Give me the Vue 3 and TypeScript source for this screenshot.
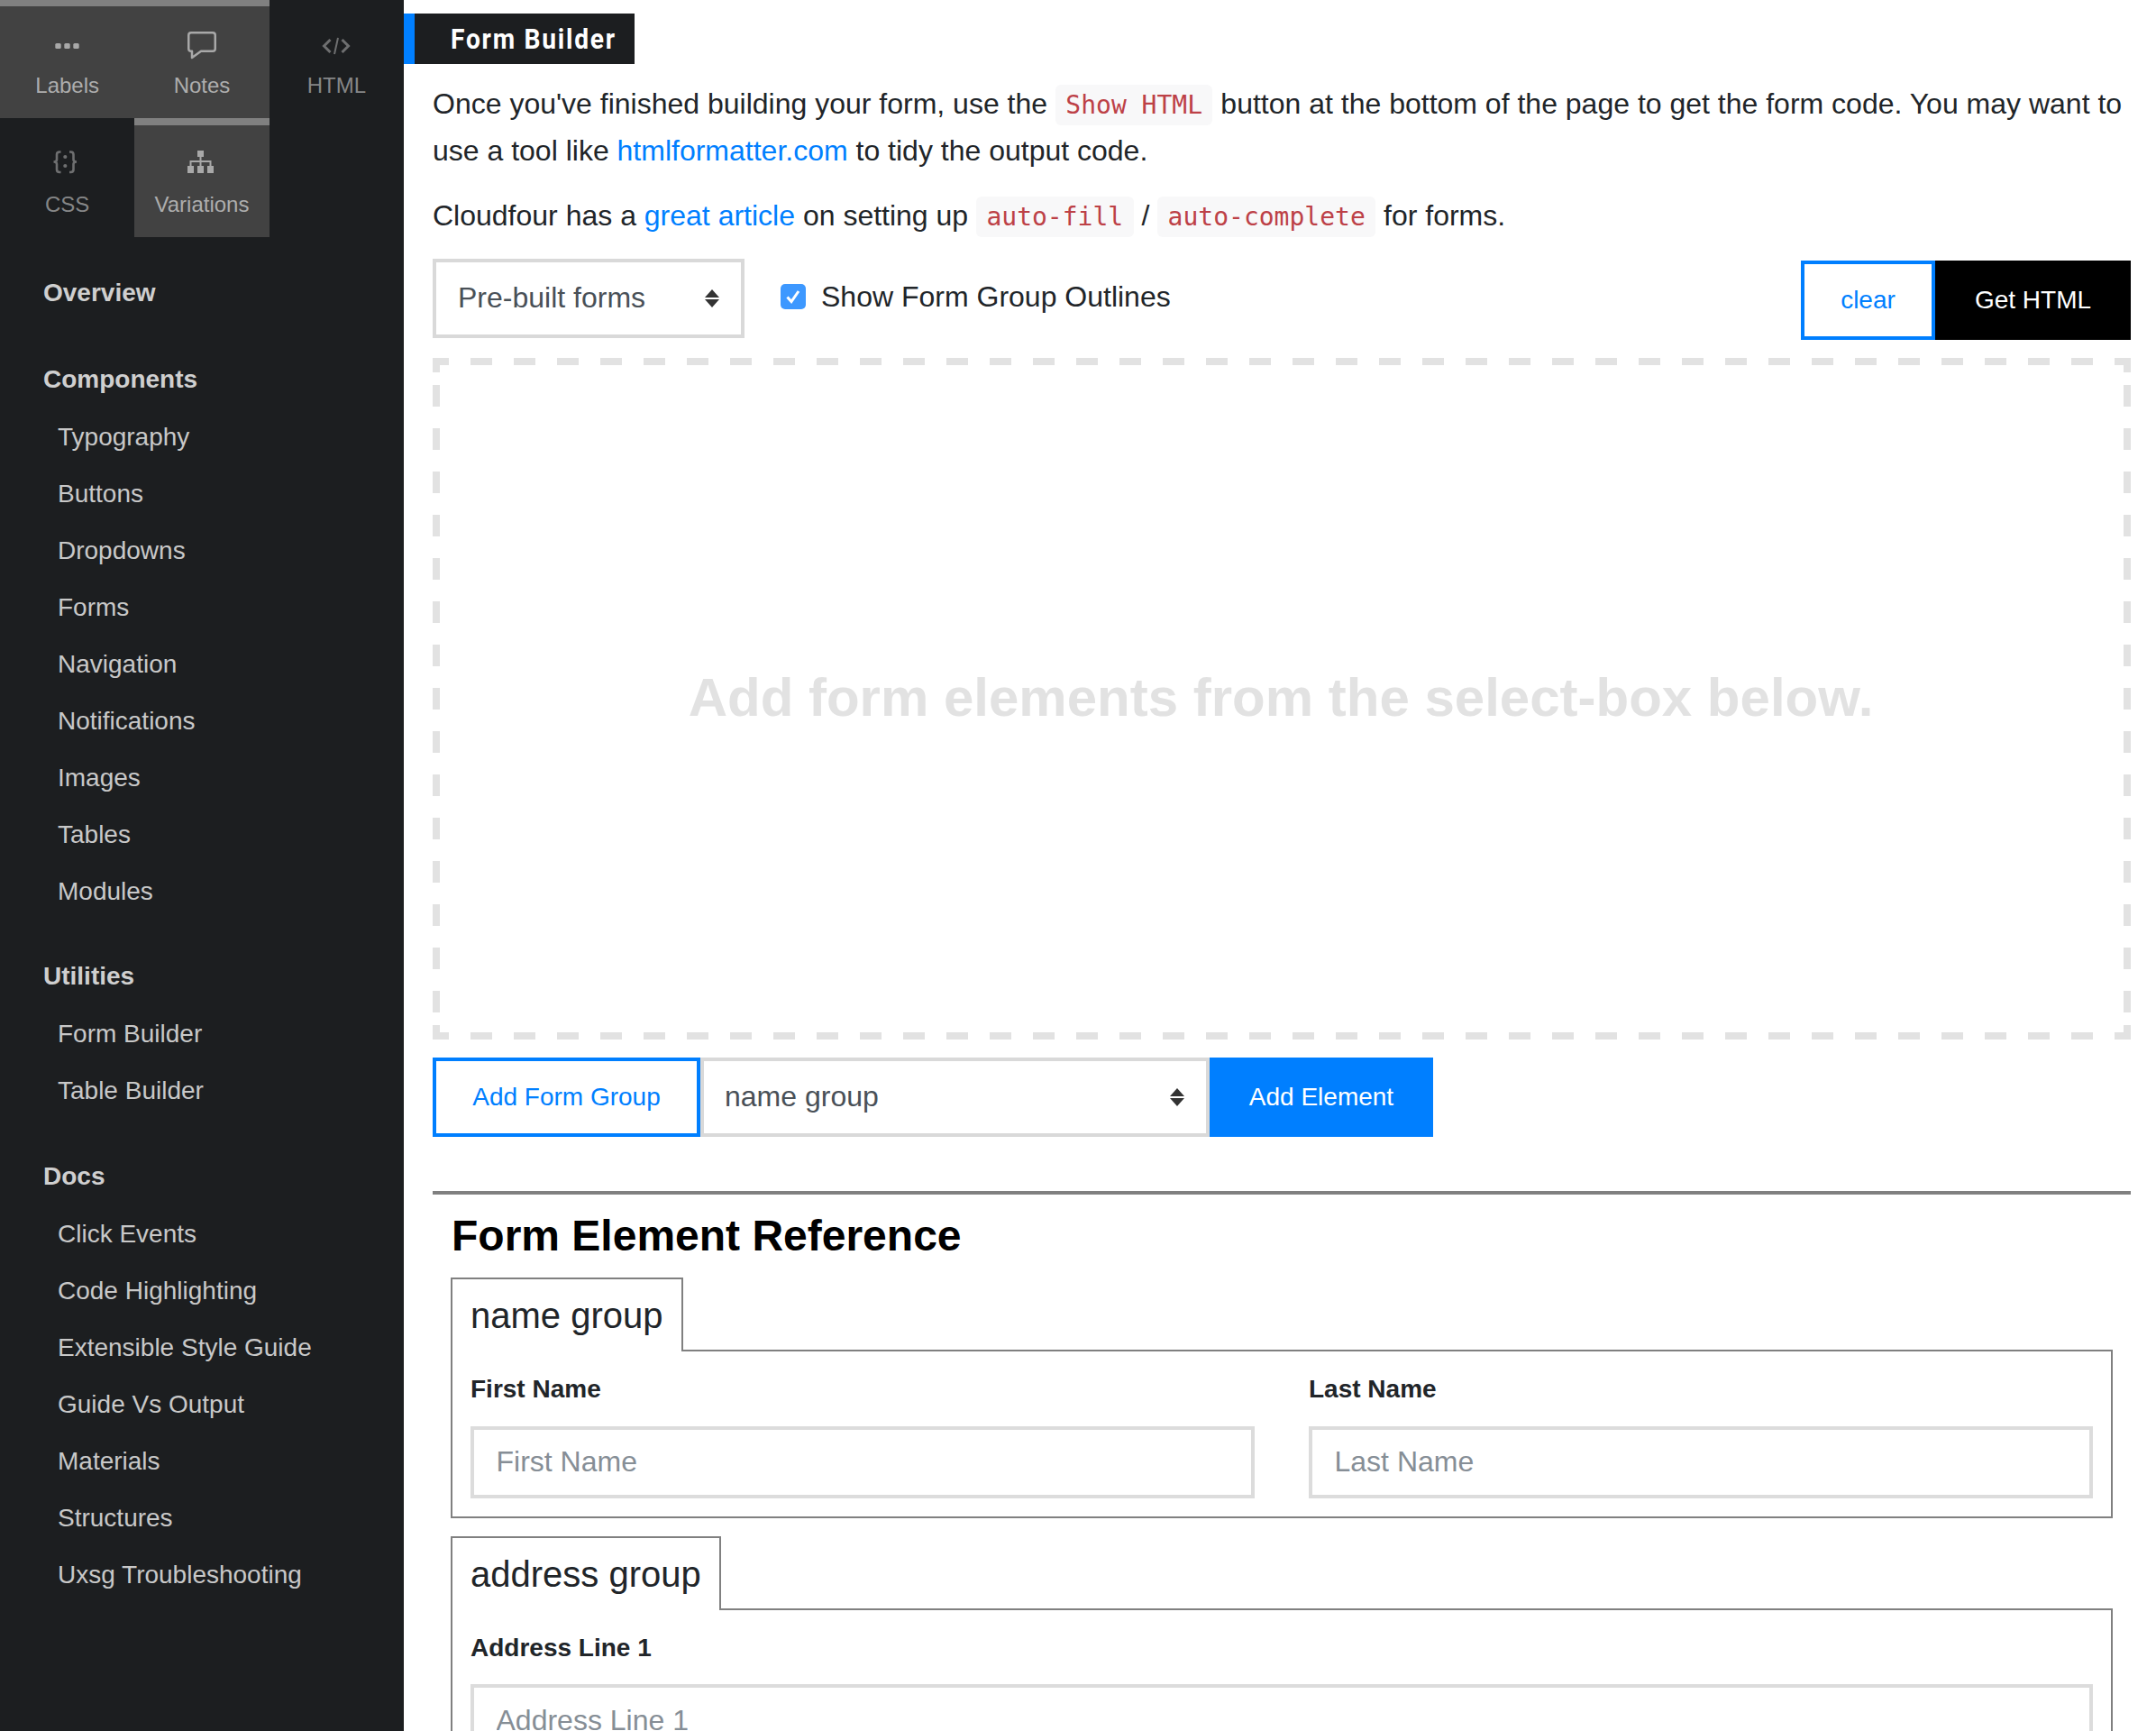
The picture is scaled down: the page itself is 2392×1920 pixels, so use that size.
<script setup lang="ts">
interface NavSection {
  title: string
  items: string[]
}

const tabs = [
  { name: 'Labels', icon: 'labels', active: true },
  { name: 'Notes', icon: 'notes', active: true },
  { name: 'HTML', icon: 'html', active: false },
  { name: 'CSS', icon: 'css', active: false },
  { name: 'Variations', icon: 'variations', active: true },
]

const nav: NavSection[] = [
  { title: 'Overview', items: [] },
  {
    title: 'Components',
    items: ['Typography', 'Buttons', 'Dropdowns', 'Forms', 'Navigation', 'Notifications', 'Images', 'Tables', 'Modules'],
  },
  { title: 'Utilities', items: ['Form Builder', 'Table Builder'] },
  {
    title: 'Docs',
    items: ['Click Events', 'Code Highlighting', 'Extensible Style Guide', 'Guide Vs Output', 'Materials', 'Structures', 'Uxsg Troubleshooting'],
  },
]
</script>

<template>
  <div class="page">
    <aside class="sidebar">
      <div class="tabs">
        <a v-for="tab in tabs" :key="tab.name" class="tab" :class="{ active: tab.active }">
          <svg class="tab-icon" width="36" height="36" viewBox="0 0 36 36">
            <g v-if="tab.icon === 'labels'" fill="currentColor">
              <rect x="4.3" y="16" width="6.4" height="6" rx="1.6" />
              <rect x="14.3" y="16" width="6.4" height="6" rx="1.6" />
              <rect x="24.3" y="16" width="6.4" height="6" rx="1.6" />
            </g>
            <path
              v-else-if="tab.icon === 'notes'"
              d="M6 4.25H30Q32.75 4.25 32.75 7V22Q32.75 24.75 30 24.75H17L7 32V24.75H6Q3.25 24.75 3.25 22V7Q3.25 4.25 6 4.25Z"
              fill="none"
              stroke="currentColor"
              stroke-width="2.5"
              stroke-linejoin="round"
            />
            <g v-else-if="tab.icon === 'html'" fill="none" stroke="currentColor" stroke-width="3">
              <path d="M11.5 12L4.5 19L11.5 26" />
              <path d="M20 10L16 28" stroke-width="2" />
              <path d="M24.5 12L31.5 19L24.5 26" />
            </g>
            <g v-else-if="tab.icon === 'css'">
              <path
                d="M10.5 4.5H9Q6 4.5 6 7.5V13Q6 15.5 2.5 15.5Q6 15.5 6 18V24Q6 27 9 27H10.5M20 4.5H21.5Q24.5 4.5 24.5 7.5V13Q24.5 15.5 28 15.5Q24.5 15.5 24.5 18V24Q24.5 27 21.5 27H20"
                fill="none"
                stroke="currentColor"
                stroke-width="2.6"
              />
              <circle cx="15.3" cy="10" r="2.1" fill="currentColor" />
              <circle cx="15.3" cy="20" r="2.1" fill="currentColor" />
            </g>
            <g v-else fill="currentColor">
              <rect x="13" y="3" width="7" height="7" />
              <rect x="2" y="20" width="7" height="8" />
              <rect x="13" y="20" width="7" height="8" />
              <rect x="24" y="20" width="7" height="8" />
              <path d="M15.5 10h2v4h11v6h-2v-4h-9v4h-2v-4h-9v4h-2v-6h11z" />
            </g>
          </svg>
          <span class="tab-label">{{ tab.name }}</span>
        </a>
      </div>

      <nav class="nav">
        <section v-for="section in nav" :key="section.title" class="nav-section">
          <a class="nav-title">{{ section.title }}</a>
          <a v-for="item in section.items" :key="item" class="nav-item">{{ item }}</a>
        </section>
      </nav>
    </aside>

    <main class="main">
      <h1 class="title"><span>Form Builder</span></h1>

      <p class="intro">
        Once you've finished building your form, use the <code>Show HTML</code> button at the bottom of the page to get the form code. You may want to use a tool like <a class="link">htmlformatter.com</a> to tidy the output code.
      </p>
      <p class="intro second">
        Cloudfour has a <a class="link">great article</a> on setting up <code>auto-fill</code> / <code>auto-complete</code> for forms.
      </p>

      <div class="toolbar">
        <div class="select prebuilt">
          <select>
            <option>Pre-built forms</option>
          </select>
          <svg class="arrows" width="16" height="20" viewBox="0 0 16 20"><path d="M8 0L16 9H0ZM0 11H16L8 20Z" /></svg>
        </div>
        <label class="check">
          <span class="box">
            <svg width="28" height="28" viewBox="0 0 28 28"><path d="M7.5 14.5L12 19.5L20 8" fill="none" stroke="#fff" stroke-width="3" /></svg>
          </span>
          Show Form Group Outlines
        </label>
        <div class="actions">
          <button class="btn outline clear" type="button">clear</button>
          <button class="btn black" type="button">Get HTML</button>
        </div>
      </div>

      <div class="canvas">
        <span>Add form elements from the select-box below.</span>
      </div>

      <div class="adder">
        <button class="btn outline add-group" type="button">Add Form Group</button>
        <div class="select group-select">
          <select>
            <option>name group</option>
          </select>
          <svg class="arrows" width="16" height="20" viewBox="0 0 16 20"><path d="M8 0L16 9H0ZM0 11H16L8 20Z" /></svg>
        </div>
        <button class="btn primary add-element" type="button">Add Element</button>
      </div>

      <hr class="rule" />

      <h2 class="ref-title">Form Element Reference</h2>

      <div class="group">
        <div class="group-tab">name group</div>
        <div class="group-body columns">
          <div class="field">
            <label>First Name</label>
            <input type="text" placeholder="First Name" />
          </div>
          <div class="field">
            <label>Last Name</label>
            <input type="text" placeholder="Last Name" />
          </div>
        </div>
      </div>

      <div class="group">
        <div class="group-tab">address group</div>
        <div class="group-body">
          <div class="field">
            <label>Address Line 1</label>
            <input type="text" placeholder="Address Line 1" />
          </div>
        </div>
      </div>
    </main>
  </div>
</template>

<style scoped>
.page {
  display: flex;
  height: 1920px;
  overflow: hidden;
  background: #fff;
  color: #212529;
  font-family: "Liberation Sans", Arial, sans-serif;
  font-size: 32px;
  line-height: 51.2px;
}

/* Sidebar */
.sidebar {
  flex: 0 0 448px;
  background: #1c1e20;
}
.tabs {
  display: grid;
  grid-template-columns: repeat(3, 149.33px);
  grid-auto-rows: 132px;
  margin-top: -1px;
}
.tab {
  display: flex;
  flex-direction: column;
  align-items: center;
  box-sizing: border-box;
  padding-top: 25px;
  border-top: 8px solid transparent;
  color: #858687;
}
.tab .tab-icon {
  color: #6e6f70;
}
.tab.active {
  border-top-color: #808080;
  background: #424242;
  color: #adadad;
}
.tab.active .tab-icon {
  color: #a8a8a8;
}
.tab-label {
  display: block;
  margin-top: 8px;
  font-size: 24px;
  line-height: 38px;
}
.nav {
  padding-top: 30px;
}
.nav-section + .nav-section {
  margin-top: 31.5px;
}
.nav-title,
.nav-item {
  display: block;
  font-size: 28px;
  line-height: 63px;
}
.nav-title {
  padding-left: 48px;
  color: #cfcfcf;
  font-weight: 700;
  line-height: 64px;
}
.nav-item {
  padding-left: 64px;
  color: #c8c8c8;
}

/* Main column */
.main {
  flex: 1 1 0;
  min-width: 0;
  padding: 15px 28px 0 32px;
}
.title {
  box-sizing: border-box;
  width: 256px;
  height: 56px;
  margin: 0 0 0 -32px;
  padding: 0 0 0 40px;
  border-left: 12px solid #007fff;
  background: #1c1e20;
  color: #fff;
  font-family: Roboto, "Liberation Sans", sans-serif;
  font-size: 32px;
  font-weight: 700;
  line-height: 56px;
  white-space: nowrap;
}
.title span {
  display: inline-block;
  letter-spacing: 2px;
  transform: scaleX(0.88);
  transform-origin: 0 50%;
}
.intro {
  margin: 19px 0 0;
}
.intro.second {
  margin-top: 20.6px;
}
code {
  padding: 6px 11.4px;
  border-radius: 6px;
  background: #f8f8f9;
  color: #bd4147;
  font-family: "DejaVu Sans Mono", monospace;
  font-size: 28px;
}
.link {
  color: #007fff;
}

.toolbar {
  display: flex;
  align-items: flex-start;
  height: 90px;
  margin-top: 21px;
}
.select {
  position: relative;
  box-sizing: border-box;
  height: 88px;
  border: 4px solid #d9d9d9;
  background: #fff;
}
.select select {
  display: block;
  width: 100%;
  height: 100%;
  margin: 0;
  padding: 0 24px 2px;
  border: 0;
  outline: 0;
  appearance: none;
  background: transparent;
  color: #495057;
  font: inherit;
}
.arrows {
  position: absolute;
  top: 50%;
  right: 24px;
  margin-top: -10px;
  fill: #333;
  pointer-events: none;
}
.prebuilt {
  width: 346px;
}
.check {
  display: flex;
  align-items: center;
  gap: 17px;
  height: 84px;
  margin-left: 40px;
}
.box {
  display: block;
  width: 28px;
  height: 28px;
  border-radius: 5px;
  background: #3d98ff;
}
.box svg {
  display: block;
}
.actions {
  display: flex;
  margin-top: 2px;
  margin-left: auto;
}
.btn {
  box-sizing: border-box;
  height: 88px;
  margin: 0;
  padding: 0;
  border: 4px solid transparent;
  border-radius: 0;
  font-family: inherit;
  font-size: 28px;
}
.btn.outline {
  border-color: #007fff;
  background: #fff;
  color: #007fff;
}
.btn.black {
  width: 217px;
  background: #000;
  color: #fff;
}
.btn.primary {
  background: #007fff;
  color: #fff;
}
.clear {
  width: 149px;
}

.canvas {
  display: flex;
  align-items: center;
  justify-content: center;
  box-sizing: border-box;
  height: 756px;
  margin-top: 20px;
  padding: 0 2px 2px 0;
  background-color: #fff;
  background-image:
    repeating-linear-gradient(90deg, #e2e2e2 0 18px, transparent 18px 42px, #e2e2e2 42px 48px),
    repeating-linear-gradient(90deg, #e2e2e2 0 18px, transparent 18px 42px, #e2e2e2 42px 48px),
    repeating-linear-gradient(180deg, #e2e2e2 0 6px, transparent 6px 30px, #e2e2e2 30px 48px),
    repeating-linear-gradient(180deg, #e2e2e2 0 6px, transparent 6px 30px, #e2e2e2 30px 48px),
    linear-gradient(#e2e2e2, #e2e2e2),
    linear-gradient(#e2e2e2, #e2e2e2),
    linear-gradient(#e2e2e2, #e2e2e2),
    linear-gradient(#e2e2e2, #e2e2e2);
  background-repeat: no-repeat;
  background-size: 100% 8px, 100% 8px, 8px 100%, 8px 100%, 8px 16px, 8px 16px, 8px 16px, 8px 16px;
  background-position: 0 0, 0 100%, 0 0, 100% 0, 0 0, 100% 0, 0 100%, 100% 100%;
  color: #e2e2e2;
  font-size: 60px;
  font-weight: 700;
  line-height: 72px;
}

.adder {
  display: flex;
  margin-top: 20px;
}
.add-group {
  width: 297px;
}
.group-select {
  width: 565px;
}
.group-select select {
  padding: 0 23px 2px;
}
.add-element {
  width: 248px;
}

.rule {
  height: 4px;
  margin: 60px 0 0;
  border: 0;
  background: #808080;
}
.ref-title {
  margin: 17px 0 17px 21px;
  color: #000;
  font-size: 48px;
  font-weight: 700;
  line-height: 57.6px;
}

.group {
  margin: 0 20px 20px;
}
.group-tab {
  position: relative;
  z-index: 1;
  display: table;
  box-sizing: border-box;
  height: 82px;
  margin-bottom: -2px;
  padding: 0 20.5px 0 20px;
  border: 2px solid #808080;
  border-bottom: 0;
  background: #fff;
  font-size: 40px;
  line-height: 80px;
}
.group-body {
  padding: 20px;
  border: 2px solid #808080;
}
.columns {
  display: grid;
  grid-template-columns: 1fr 1fr;
  gap: 60px;
}
.field label {
  display: block;
  margin-bottom: 18px;
  font-size: 28px;
  font-weight: 700;
  line-height: 44.8px;
}
.field input {
  display: block;
  box-sizing: border-box;
  width: 100%;
  height: 80px;
  padding: 0 24.5px;
  border: 4px solid #dcdcdc;
  border-radius: 0;
  outline: 0;
  color: #495057;
  font: inherit;
}
.field input::placeholder {
  color: #868e96;
  opacity: 1;
}
</style>
